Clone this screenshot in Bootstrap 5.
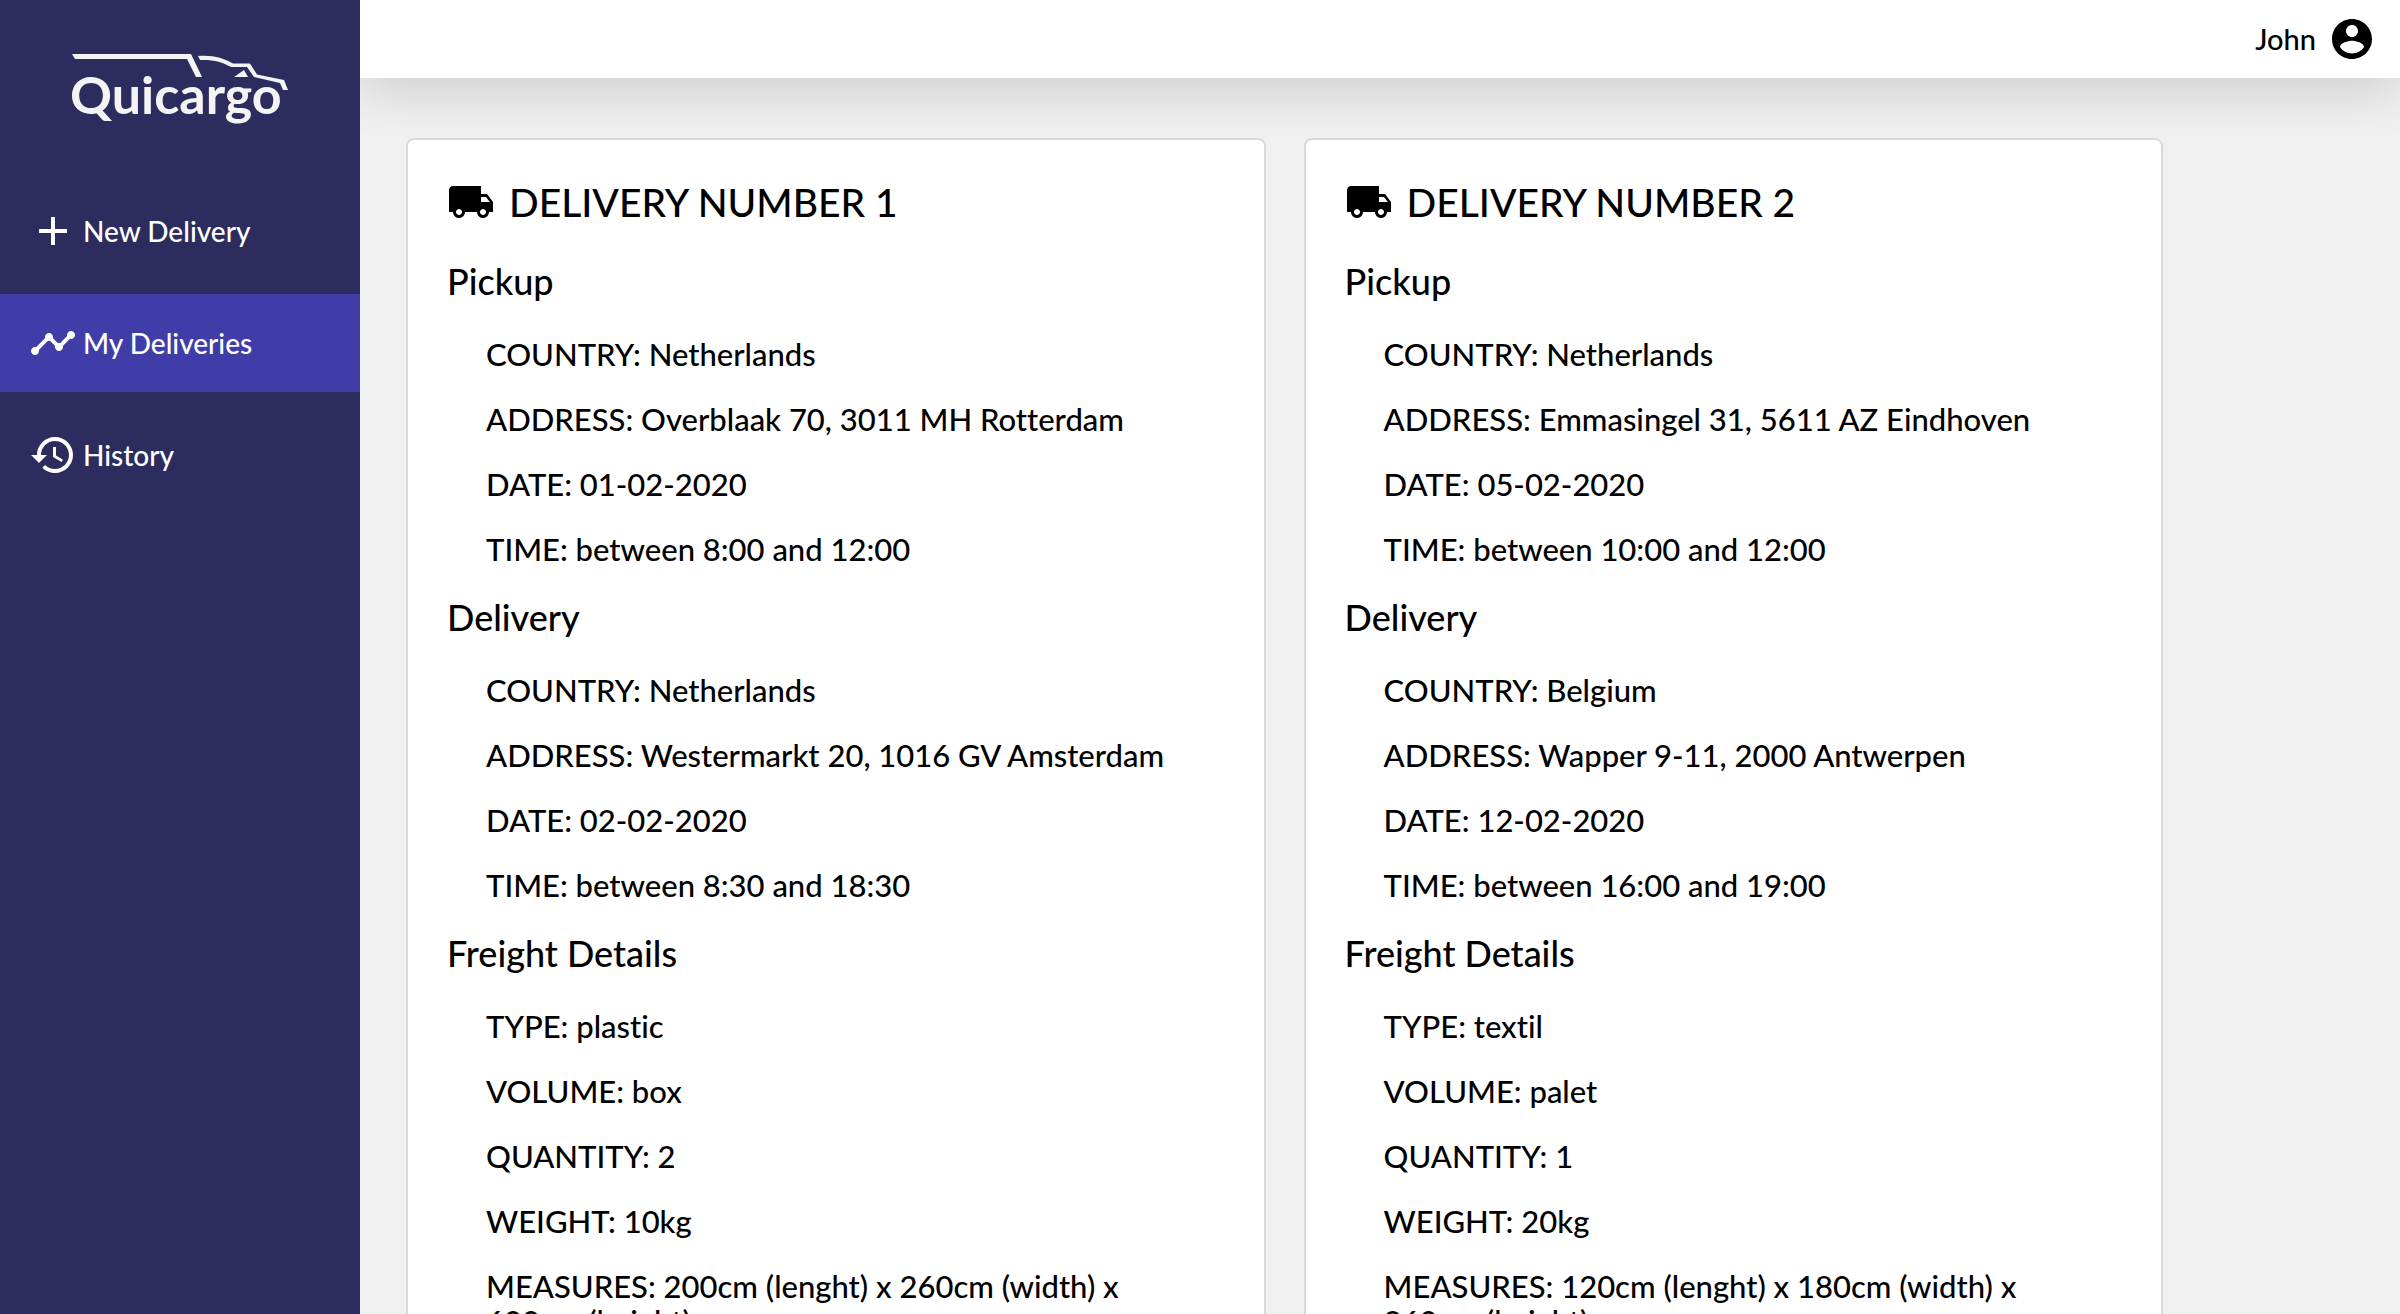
<!DOCTYPE html>
<html lang="en">
<head>
<meta charset="utf-8">
<meta name="viewport" content="width=device-width, initial-scale=1">
<title>Quicargo - My Deliveries</title>
<link rel="stylesheet" href="https://cdn.jsdelivr.net/npm/bootstrap@5.3.0/dist/css/bootstrap.min.css">
<style>
  body { font-family: Lato, "Liberation Sans", sans-serif; font-weight: 500; font-variant-ligatures: none; color: #000; background: #f0f0f0; }
  svg { fill: currentColor; flex: none; }
  .icon { width: 48px; height: 48px; }
  .side { width: 15%; background: #2d2c5e; z-index: 2; }
  .logo { width: 218px; height: 76px; margin: 53px 0 53px 71px; color: #f4f4f4; }
  .logo text { font: 700 52px Lato, sans-serif; }
  .side .nav { gap: 14px; }
  .side .nav-link { height: 98px; padding: 0 29px; gap: 6px; font-size: 28px; color: #fff; }
  .side .nav-link.active { background: #403da9; }
  .topbar { height: 78px; padding: 0 24px; gap: 12px; font-size: 29px; background: #fff; box-shadow: 0 16px 48px rgba(0, 0, 0, .13); }
  .scroller { scrollbar-width: none; }
  .deliveries { --bs-gutter-x: 38px; --bs-gutter-y: 40px; width: 88%; margin: 20px 0 60px 27px; }
  .delivery { padding: 38px 39px 10px; border: 2px solid #d9d9d9; border-radius: 8px; }
  .delivery h2 { font-size: 39px; line-height: 48px; gap: 14px; margin: 0 0 35px; font-weight: 500; }
  .delivery h3 { font-size: 36px; line-height: 40px; margin: 0 0 36px; font-weight: 500; }
  .delivery p { font-size: 31px; line-height: 35px; margin: 0 0 30px; padding: 0 20px 0 39px; }
</style>
<script src="https://cdn.jsdelivr.net/npm/bootstrap@5.3.0/dist/js/bootstrap.bundle.min.js"></script>
</head>
<body>
<svg class="d-none">
  <symbol id="truck" viewBox="0 0 24 24"><path d="M20 8h-3V4H3c-1.100 0-2 .9-2 2v11h2c0 1.660 1.340 3 3 3s3-1.340 3-3h6c0 1.660 1.340 3 3 3s3-1.340 3-3h2v-5l-3-4zM6 18.500c-.83 0-1.500-.67-1.500-1.500s.67-1.500 1.500-1.500 1.500.67 1.500 1.500-.67 1.500-1.500 1.500zm13.500-9l1.960 2.500H17V9.500h2.500zm-1.500 9c-.83 0-1.500-.67-1.500-1.500s.67-1.500 1.500-1.500 1.500.67 1.500 1.500-.67 1.500-1.500 1.500z"/></symbol>
</svg>
<div class="d-flex vh-100 overflow-hidden">
  <aside class="side d-flex flex-column flex-shrink-0 position-relative">
    <svg class="logo" viewBox="71 53 218 76" role="img" aria-label="Quicargo">
      <path d="M72 54H191L202 77H196L187 59H75Z"/>
      <path d="M198 56C214 55 223 58 233 63.500H250L257 74.500L284 80L288 90H283L280 83L254 77L247 67H231C222 62 214 59.500 200 60Z"/>
      <path d="M234 77L244 70L248 77Z"/>
      <text x="70" y="114">Quicargo</text>
    </svg>
    <nav class="nav flex-column flex-nowrap">
      <a class="nav-link d-flex align-items-center" href="#"><svg class="icon" viewBox="0 0 24 24"><path d="M19 13h-6v6h-2v-6H5v-2h6V5h2v6h6v2z"/></svg>New Delivery</a>
      <a class="nav-link active d-flex align-items-center" href="#" aria-current="page"><svg class="icon" viewBox="0 0 24 24"><path d="M23 8c0 1.100-.9 2-2 2-.18 0-.35-.02-.51-.07l-3.560 3.550c.05.16.07.34.07.52 0 1.100-.9 2-2 2s-2-.9-2-2c0-.18.02-.36.07-.52l-2.550-2.550c-.16.05-.34.07-.52.07s-.36-.02-.52-.07l-4.550 4.560c.05.16.07.33.07.51 0 1.100-.9 2-2 2s-2-.9-2-2 .9-2 2-2c.18 0 .35.02.51.07l4.560-4.550C8.020 9.360 8 9.180 8 9c0-1.100.9-2 2-2s2 .9 2 2c0 .18-.02.36-.07.52l2.550 2.550c.16-.05.34-.07.52-.07s.36.02.52.07l3.550-3.560C19.020 8.350 19 8.180 19 8c0-1.100.9-2 2-2s2 .9 2 2z"/></svg>My Deliveries</a>
      <a class="nav-link d-flex align-items-center" href="#"><svg class="icon" viewBox="0 0 24 24"><path d="M13 3c-4.970 0-9 4.030-9 9H1l3.890 3.890.07.14L9 12H6c0-3.870 3.130-7 7-7s7 3.130 7 7-3.130 7-7 7c-1.930 0-3.680-.79-4.940-2.060l-1.420 1.420C8.270 19.990 10.510 21 13 21c4.970 0 9-4.030 9-9s-4.030-9-9-9zm-1 5v5l4.280 2.540.72-1.210-3.500-2.080V8H12z"/></svg>History</a>
    </nav>
  </aside>
  <div class="d-flex flex-column flex-grow-1">
    <header class="topbar d-flex align-items-center justify-content-end flex-shrink-0 position-relative">
      John
      <svg class="icon" viewBox="0 0 24 24"><path d="M12 2C6.480 2 2 6.480 2 12s4.480 10 10 10 10-4.480 10-10S17.520 2 12 2zm0 3c1.660 0 3 1.340 3 3s-1.340 3-3 3-3-1.340-3-3 1.340-3 3-3zm0 14.200c-2.500 0-4.710-1.280-6-3.220.03-1.990 4-3.080 6-3.080 1.990 0 5.970 1.090 6 3.080-1.290 1.940-3.500 3.220-6 3.220z"/></svg>
    </header>
    <main class="scroller flex-grow-1 overflow-auto">
      <div class="deliveries row row-cols-2">
        <div class="col"><article class="delivery bg-white">
          <h2 class="d-flex align-items-center"><svg class="icon"><use href="#truck"/></svg>DELIVERY NUMBER 1</h2>
          <h3>Pickup</h3>
          <p>COUNTRY: Netherlands</p>
          <p>ADDRESS: Overblaak 70, 3011 MH Rotterdam</p>
          <p>DATE: 01-02-2020</p>
          <p>TIME: between 8:00 and 12:00</p>
          <h3>Delivery</h3>
          <p>COUNTRY: Netherlands</p>
          <p>ADDRESS: Westermarkt 20, 1016 GV Amsterdam</p>
          <p>DATE: 02-02-2020</p>
          <p>TIME: between 8:30 and 18:30</p>
          <h3>Freight Details</h3>
          <p>TYPE: plastic</p>
          <p>VOLUME: box</p>
          <p>QUANTITY: 2</p>
          <p>WEIGHT: 10kg</p>
          <p>MEASURES: 200cm (lenght) x 260cm (width) x 600cm (height)</p>
        </article></div>
        <div class="col"><article class="delivery bg-white">
          <h2 class="d-flex align-items-center"><svg class="icon"><use href="#truck"/></svg>DELIVERY NUMBER 2</h2>
          <h3>Pickup</h3>
          <p>COUNTRY: Netherlands</p>
          <p>ADDRESS: Emmasingel 31, 5611 AZ Eindhoven</p>
          <p>DATE: 05-02-2020</p>
          <p>TIME: between 10:00 and 12:00</p>
          <h3>Delivery</h3>
          <p>COUNTRY: Belgium</p>
          <p>ADDRESS: Wapper 9-11, 2000 Antwerpen</p>
          <p>DATE: 12-02-2020</p>
          <p>TIME: between 16:00 and 19:00</p>
          <h3>Freight Details</h3>
          <p>TYPE: textil</p>
          <p>VOLUME: palet</p>
          <p>QUANTITY: 1</p>
          <p>WEIGHT: 20kg</p>
          <p>MEASURES: 120cm (lenght) x 180cm (width) x 260cm (height)</p>
        </article></div>
      </div>
    </main>
  </div>
</div>
</body>
</html>
